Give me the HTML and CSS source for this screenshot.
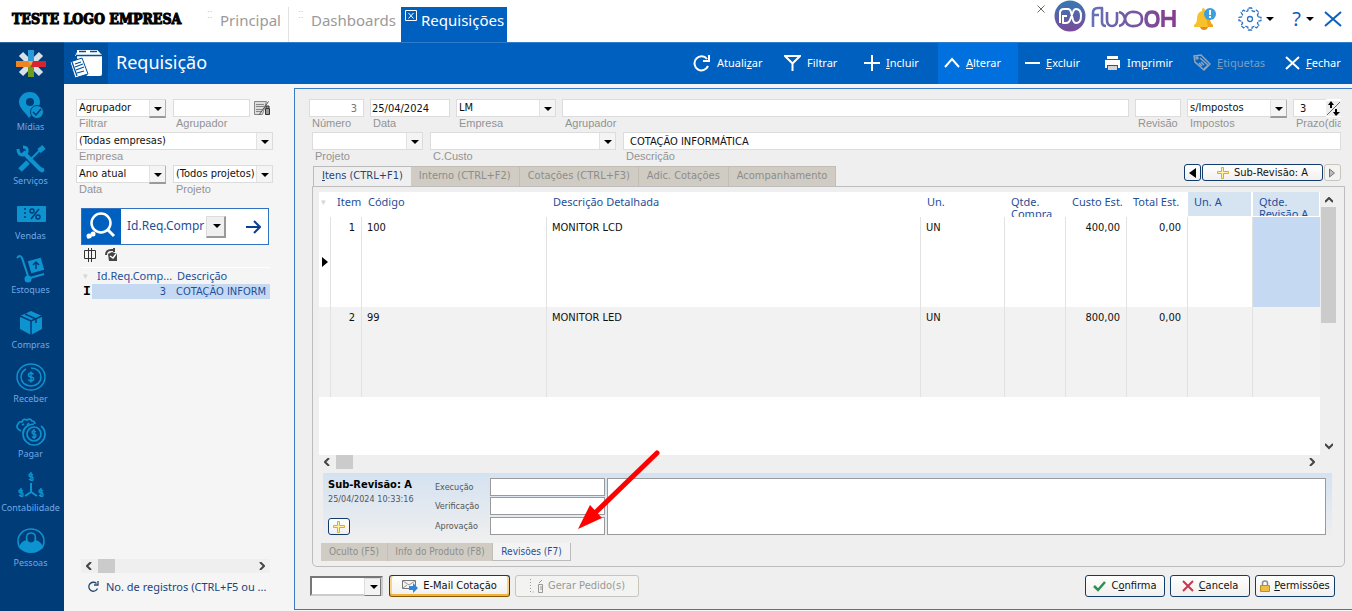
FILE: index.html
```html
<!DOCTYPE html>
<html lang="pt-BR">
<head>
<meta charset="utf-8">
<title>Requisições</title>
<link rel="stylesheet" href="styles.css">
</head>
<body>
<header class="top">
  <div class="company">TESTE LOGO EMPRESA</div>
  <nav class="pages">
    <a class="page" href="#"><span class="dots">⁚⁚</span>Principal</a>
    <a class="page page-second" href="#"><span class="dots">⁚⁚</span>Dashboards</a>
    <a class="page page-on" href="#"><svg class="page-x" width="12" height="12" viewBox="0 0 12 12" fill="none" stroke="#fff"><path d="M.5.5h11v10H.5zM3.5 3l5 5.500M8.500 3l-5 5.500"/></svg>Requisições</a>
  </nav>
  <div class="top-tools">
    <svg class="tiny-x" width="8" height="8" viewBox="0 0 8 8" stroke="#666"><path d="M.5.5l7 7M7.500.5l-7 7"/></svg>
    <svg class="brand" width="124" height="32" viewBox="0 0 124 32" fill="none" stroke-linejoin="round">
      <defs>
        <linearGradient id="g1" x1="0" y1="0" x2="0" y2="1"><stop offset="0" stop-color="#3679b3"/><stop offset="1" stop-color="#7c4a98"/></linearGradient>
        <linearGradient id="g2" gradientUnits="userSpaceOnUse" x1="38" y1="0" x2="122" y2="0"><stop offset="0" stop-color="#6473b5"/><stop offset="1" stop-color="#873c8d"/></linearGradient>
      </defs>
      <circle cx="16" cy="16" r="15.500" fill="url(#g1)"/>
      <path stroke="#fff" stroke-width="2" d="M6 23V13q0-4 4-4h4q2 0 3 3l2 8q1 3 3 3 5 0 5-7t-5-7q-2 0-3 3l-3 8q-1 3-4 3h-3v-8M8 16h5"/>
      <path stroke="url(#g2)" stroke-width="2.600" d="M39 27V13q0-5 5-5h4v14q0 4 4 4M39 15h6M53 12v8q0 6 5 6t5-6v-8M65 12q5 1 6 7t6 7M65 26q5-1 6-7t6-7q11-1 11 7t-11 7"/>
      <path stroke="url(#g2)" stroke-width="3.500" d="M98 12q-6 0-6 7t6 7 6-7-6-7M109 10v17M120 10v17M109 18.500h11"/>
    </svg>
    <svg class="bell" width="22" height="24" viewBox="0 0 22 24"><path fill="#f8c02a" d="M9 1q2 0 2 3 5 1 5 8 0 4 3 6v2H0v-2q3-2 3-6 0-7 5-8 0-3 1-3z"/><path fill="#f0a51c" d="M11 4q5 1 5 8 0 4 3 6v2h-5z"/><path fill="#e18a1e" d="M6 20h8q-1 3-4 3t-4-3z"/><circle cx="16" cy="7" r="6" fill="#3b9fe0"/><path stroke="#fff" stroke-width="2" d="M16 3v5M16 9v2"/></svg>
    <svg class="gear" width="24" height="24" viewBox="-12 -12 24 24" fill="none" stroke="#2a72c4" stroke-width="1.300" stroke-linejoin="round"><path stroke-dasharray="4 1" d="M8.200-2.200L11-1.700V1.700L8.200 2.200 7.400 4.200 8.900 6.500 6.500 8.900 4.200 7.400 2.200 8.200 1.700 11H-1.700L-2.200 8.200-4.200 7.400-6.500 8.900-8.900 6.500-7.400 4.200-8.200 2.200-11 1.700V-1.700L-8.200-2.200-7.400-4.200-8.900-6.500-6.500-8.900-4.200-7.400-2.200-8.200-1.700-11H1.700L2.200-8.200 4.200-7.400 6.500-8.900 8.900-6.500 7.400-4.200z"/><circle r="2.500"/></svg>
    <i class="tri tri-gear"></i>
    <span class="help">?</span><i class="tri tri-help"></i>
    <svg class="big-x" width="18" height="16" viewBox="0 0 18 16" stroke="#0a5fc0" stroke-width="2"><path d="M1 1l16 14M17 1L1 15"/></svg>
  </div>
</header>

<div class="shell">
  <aside class="side">
    <div class="star"><svg width="32" height="30" viewBox="0 0 32 30" stroke-width="6" fill="none"><path stroke="#d9e0e8" d="M6 5l20 20M26 5L6 25"/><path stroke="#2a9bd8" d="M16 1v13"/><path stroke="#6d9c1e" d="M16 15v13"/><path stroke="#ee8522" d="M1 15h14"/><path stroke="#d8242c" d="M16 15h15"/><path fill="#f3a24c" stroke="none" d="M13 12h5l-2 5z"/></svg></div>
    <nav class="modules">
      <a class="mod" href="#"><svg width="32" height="30" viewBox="0 0 32 30"><path fill="#0d93d0" d="M15 2C8 2 4 7 4 12c0 6 6 10 10 16 6-7 11-10 11-16 0-5-4-10-10-10z"/><circle cx="15" cy="12" r="4" fill="#003c78"/><circle cx="22" cy="22" r="6.500" fill="#0d93d0" stroke="#003c78"/><path d="M18 22l3 3 5-6" fill="none" stroke="#003c78" stroke-width="1.500"/></svg>Mídias</a>
      <a class="mod" href="#"><svg width="32" height="30" viewBox="0 0 32 30" fill="none" stroke="#0d93d0"><path stroke-width="4" d="M8 8l18 18"/><path stroke-width="3" d="M3 5q0 6 5 6 5-1 4-6-1-2-4-2"/><path stroke-width="2" d="M28 3L14 17"/><path stroke-width="5" d="M29 3l-5 4M13 18l-8 8"/><circle cx="27" cy="26" r="2" fill="#0d93d0"/></svg>Serviços</a>
      <a class="mod" href="#"><svg width="32" height="30" viewBox="0 0 32 30"><rect x="2" y="7" width="29" height="16" rx="1" fill="#0d93d0"/><path stroke="#003c78" stroke-dasharray="2 2" stroke-width="1.500" d="M10 9v12"/><g fill="none" stroke="#003c78" stroke-width="1.500"><circle cx="17" cy="12" r="2"/><circle cx="23" cy="18" r="2"/><path d="M24 10l-8 10"/></g></svg>Vendas</a>
      <a class="mod" href="#"><svg width="32" height="30" viewBox="0 0 32 30" fill="none" stroke="#0d93d0" stroke-width="2"><path d="M2 5q3-4 5 0l6 18M15 25l14-4"/><circle cx="13" cy="26" r="2.500" fill="#0d93d0"/><path fill="#0d93d0" d="M14 9l11-3 3 10-11 3z"/><path stroke="#003c78" stroke-width="1.500" d="M21 16V9M18 12l3-3 3 3"/></svg>Estoques</a>
      <a class="mod" href="#"><svg width="32" height="30" viewBox="0 0 32 30"><path fill="#0d93d0" d="M16 3l11 5v13l-11 6-11-6V8z"/><path d="M5 8l11 5 11-5M16 13v14M10 6l11 5v4" fill="none" stroke="#003c78" stroke-width="1.500"/></svg>Compras</a>
      <a class="mod" href="#"><svg width="32" height="30" viewBox="0 0 32 30" fill="none" stroke="#0d93d0" stroke-width="1.500"><ellipse cx="16" cy="15" rx="14" ry="13"/><path d="M11 7q-5 3-5 8c0 5 4 9 10 9s10-4 10-9-4-9-10-9"/><path d="M18.500 12.500q-1-1.500-2.500-1.500-2.500 0-2.500 2t2.500 2 2.500 2-2.500 2q-2 0-2.500-1.500M16 9.500v11"/></svg>Receber</a>
      <a class="mod" href="#"><svg width="32" height="30" viewBox="0 0 32 30" fill="none" stroke="#0d93d0" stroke-width="1.700"><path d="M6 14Q0 11 3 7q1-3 4-2 1-4 5-2 3-2 5 1 3 0 3 3M7 8l2-1M12 8l2-2"/><path d="M26 9q4 3 4 8c0 6-5 11-11 11S8 23 8 17 13 7 19 7"/><circle cx="19" cy="17" r="7"/><path d="M21 15q-4-2-4 0t2 2 2 2-4 1M19 12v10" stroke-width="1.300"/></svg>Pagar</a>
      <a class="mod" href="#"><svg width="32" height="30" viewBox="0 0 32 30" fill="none" stroke="#0d93d0" stroke-width="1.400"><path stroke-width="2" d="M16 12v9l-6 4M16 21l6 4"/><path d="M18 4q-4-2-4 0t2 1.500T18 8t-4 0M16 1v9M8 20q-4-2-4 0t2 1.500T8 24t-4 0M6 17v9M28 20q-4-2-4 0t2 1.500 2 2.500-4 0M26 17v9"/></svg>Contabilidade</a>
      <a class="mod" href="#"><svg width="32" height="30" viewBox="0 0 32 30"><path d="M6 23Q3 20 3 15C3 8 9 3 16 3s13 5 13 12q0 5-3 8" fill="none" stroke="#0d93d0" stroke-width="1.500"/><path d="M12 15q-2-8 4-8t4 8" fill="none" stroke="#0d93d0" stroke-width="1.500"/><path fill="#0d93d0" d="M12 14q4 5 8 0 6 1 8 7-4 6-12 6T4 21q2-6 8-7z"/></svg>Pessoas</a>
    </nav>
  </aside>

  <div class="work">
    <div class="bar">
      <div class="bar-icon"><svg width="36" height="30" viewBox="0 0 36 30"><path fill="#fff" d="M7 1h20l5 5v19q0 2-2 2H17L7 9z"/><path fill="#fff" d="M8 1h19l5 6H5z"/><path stroke="#0050a0" stroke-width="1.500" d="M9 2.500h7M20 2.500h7M6 6.500h26" fill="none"/><path fill="#fff" stroke="#0050a0" d="M0 13l12-4 6 16-13 4z"/><path stroke="#0050a0" stroke-width="1.300" d="M5 15l6-2M5 18l8-3M6 21l8-3M7 24l7-2M2 13l5 14"/></svg></div>
      <h1 class="bar-title">Requisição</h1>
      <div class="acts">
        <button class="act w91"><svg width="18" height="18" viewBox="0 0 18 18" fill="none" stroke="#fff" stroke-width="2"><path d="M15 12a7 7 0 1 1-1-7M16 1v6h-6"/></svg><span>Atuali<u>z</u>ar</span></button>
        <button class="act w80"><svg width="17" height="18" viewBox="0 0 17 18" fill="none" stroke="#fff" stroke-width="2"><path d="M1 2h15L9 9H8zM8.500 9v8"/></svg><span>Filtrar</span></button>
        <button class="act w80"><svg width="16" height="18" viewBox="0 0 16 18" stroke="#fff" stroke-width="2"><path d="M0 9h16M8 1v16"/></svg><span><u>I</u>ncluir</span></button>
        <button class="act w80 act-on"><svg width="16" height="18" viewBox="0 0 16 18" fill="none" stroke="#fff" stroke-width="2"><path d="M1 13l7-8 7 8"/></svg><span><u>A</u>lterar</span></button>
        <button class="act w80"><svg width="16" height="18" viewBox="0 0 16 18" stroke="#fff" stroke-width="2"><path d="M1 9h15"/></svg><span><u>E</u>xcluir</span></button>
        <button class="act w89"><svg width="17" height="18" viewBox="0 0 17 18"><path fill="#fff" d="M3 2h11v3H3zM1 6h15v8h-2v-3H3v3H1z"/><path fill="#d4d4d4" d="M4 12h9v4H4z"/></svg><span>Im<u>p</u>rimir</span></button>
        <button class="act w92 act-off" disabled><svg width="18" height="18" viewBox="0 0 18 18" fill="none" stroke="#91a4b8" stroke-width="1.500"><path d="M1 2l7-1 9 9-6 6-9-8zM7 4l8 7-4 4M8 8l3 3M6 9l3 3"/><circle cx="4" cy="4" r="1"/></svg><span><u>E</u>tiquetas</span></button>
        <button class="act w73"><svg width="15" height="18" viewBox="0 0 15 18" stroke="#fff" stroke-width="2"><path d="M1 3l13 12M14 3L1 15"/></svg><span><u>F</u>echar</span></button>
      </div>
    </div>

    <div class="content">
      <section class="finder">
        <div class="row row-f">
          <div class="field f90"><span class="combo raised"><select id="fFiltrar"><option>Agrupador</option></select></span><label for="fFiltrar">Filtrar</label></div>
          <div class="field f77"><input id="fAgr" type="text"><label for="fAgr">Agrupador</label></div>
          <button class="edit-list" aria-label="Editar"><svg width="17" height="17" viewBox="0 0 17 17" fill="none" stroke="#888"><path fill="#ddd" d="M.5 1.500h12l-4 13h-8zM2 4.500h8M2 6.500h8M2 9.500h7M2 11.500h6"/><path stroke="#555" d="M14.500 1.500L5 15"/><path fill="#999" stroke="#333" d="M11.500 8.500h4v6h-4zM12 8V6h3v2"/></svg></button>
        </div>
        <div class="row row-f"><div class="field grow"><span class="combo"><select id="fEmp"><option>(Todas empresas)</option></select></span><label for="fEmp">Empresa</label></div></div>
        <div class="row row-f">
          <div class="field f90"><span class="combo raised"><select id="fData"><option>Ano atual</option></select></span><label for="fData">Data</label></div>
          <div class="field grow"><span class="combo"><select id="fProj"><option>(Todos projetos)</option></select></span><label for="fProj">Projeto</label></div>
        </div>
        <div class="search">
          <span class="search-ic"><svg width="40" height="34" viewBox="0 0 40 34" fill="none" stroke="#fff" stroke-width="2.500"><circle cx="19" cy="14" r="9.500"/><path stroke-width="3" d="M25 20l7 7"/><g stroke="none" fill="#fff"><circle cx="7" cy="27" r="2.500"/><circle cx="11" cy="25" r="2.500"/><path d="M5 30l3-4 2 2z"/></g></svg></span>
          <span class="combo chunky"><select aria-label="Campo de busca"><option>Id.Req.Compr</option></select></span>
          <button class="go" aria-label="Buscar"><svg width="15" height="14" viewBox="0 0 15 14" fill="none" stroke="#0a3f96" stroke-width="2"><path d="M0 7h13M8 1l6 6-6 6"/></svg></button>
        </div>
        <div class="mini">
          <svg width="12" height="14" viewBox="0 0 12 14" fill="none" stroke="#333"><path d="M.5 2.500h11v8H.5z"/><path d="M4.500 0v14M7.500 0v14"/></svg>
          <svg width="13" height="13" viewBox="0 0 13 13" fill="none"><path stroke="#444" stroke-width="2" d="M1 7Q1 2 6 2h3M9 0v4"/><path fill="#444" d="M3 6l4-2 5 2v7H4z"/><path stroke="#fff" stroke-width="1.500" d="M5 8l3 2 3-4"/></svg>
        </div>
        <table class="list">
          <colgroup><col class="c11"><col class="c80"><col></colgroup>
          <thead><tr><th class="pale">▾</th><th>Id.Req.Comp...</th><th>Descrição</th></tr></thead>
          <tbody><tr><td class="cur">I</td><td class="sel num">3</td><td class="sel">COTAÇÃO INFORM</td></tr></tbody>
        </table>
        <div class="hbar hbar-left"><svg width="7" height="8" viewBox="0 0 7 8" class="chev"><path d="M5 0L1 4l4 4"/></svg><i class="thumb"></i><svg width="7" height="8" viewBox="0 0 7 8" class="chev end"><path d="M2 0l4 4-4 4"/></svg></div>
        <button class="count"><svg width="11" height="11" viewBox="0 0 11 11" fill="none" stroke="#27496f" stroke-width="1.300"><path d="M9.500 7.500a4.500 4.500 0 1 1-1-5M10 0v4H6"/></svg>No. de registros (CTRL+F5 ou ...</button>
      </section>

      <main class="form">
        <div class="row gap6">
          <div class="field f55"><input class="right dim" id="num" type="text" value="3"><label for="num">Número</label></div>
          <div class="field f80"><input class="tight" id="dat" type="text" value="25/04/2024"><label for="dat">Data</label></div>
          <div class="field f100"><span class="combo"><select id="emp"><option>LM</option></select></span><label for="emp">Empresa</label></div>
          <div class="field grow"><input id="agr" type="text"><label for="agr">Agrupador</label></div>
          <div class="field f46"><input id="rev" type="text"><label for="rev">Revisão</label></div>
          <div class="field f100"><span class="combo raised"><select id="imp"><option>s/Impostos</option></select></span><label for="imp">Impostos</label></div>
          <div class="field f48"><span class="spin"><input id="prz" type="text" value="3"><svg width="15" height="15" viewBox="0 0 15 15"><path stroke="#666" d="M1 14L14 1"/><path d="M5 0l3 4H6v3H4V4H2zM10 15l-3-4h2V8h2v3h3z"/></svg></span><label for="prz">Prazo(dia</label></div>
        </div>
        <div class="row gap7 row-b">
          <div class="field f111"><span class="combo"><select id="prj"><option></option></select></span><label for="prj">Projeto</label></div>
          <div class="field f186"><span class="combo"><select id="cc"><option></option></select></span><label for="cc">C.Custo</label></div>
          <div class="field grow"><input id="desc" type="text" value="COTAÇÃO INFORMÁTICA"><label for="desc">Descrição</label></div>
        </div>
        <div class="tabline">
          <button class="tab tab-on"><span><u>I</u>tens (CTRL+F1)</span></button><button class="tab">Interno (CTRL+F2)</button><button class="tab">Cotações (CTRL+F3)</button><button class="tab">Adic. Cotações</button><button class="tab">Acompanhamento</button>
          <div class="revnav">
            <button class="btn nav-btn" aria-label="Anterior"><svg width="7" height="10" viewBox="0 0 7 10"><path d="M7 0v10L0 5z"/></svg></button>
            <button class="btn rev-btn"><svg width="12" height="12" viewBox="0 0 12 12"><path fill="#fff3a8" stroke="#e6a91c" d="M4.500.5h2v4h5v2h-5v5h-2v-5h-4v-2h4z"/></svg>Sub-Revisão: A</button>
            <button class="btn nav-btn off" aria-label="Próximo"><svg width="7" height="10" viewBox="0 0 7 10"><path fill="#bbb" stroke="#777" d="M.5 1v8l5-4z"/></svg></button>
          </div>
        </div>

        <div class="pane">
          <div class="gridbox">
            <div class="gridwhite">
              <table class="items">
                <colgroup><col class="c11"><col class="c31"><col class="c185"><col><col class="c84"><col class="c61"><col class="c61"><col class="c61"><col class="c65"><col class="c68"></colgroup>
                <thead><tr><th class="pale">▾</th><th>Item</th><th>Código</th><th>Descrição Detalhada</th><th>Un.</th><th><div class="clip">Qtde.<br>Compra</div></th><th>Custo Est.</th><th>Total Est.</th><th class="hl"><div class="clip tint">Un. A</div></th><th class="hl"><div class="clip tint">Qtde.<br>Revisão A</div></th></tr></thead>
                <tbody>
                  <tr><td class="mark"><svg width="6" height="10" viewBox="0 0 6 10"><path d="M0 0v10l6-5z"/></svg></td><td class="num">1</td><td>100</td><td>MONITOR LCD</td><td>UN</td><td></td><td class="num">400,00</td><td class="num">0,00</td><td></td><td class="selcell"></td></tr>
                  <tr class="alt"><td></td><td class="num">2</td><td>99</td><td>MONITOR LED</td><td>UN</td><td></td><td class="num">800,00</td><td class="num">0,00</td><td></td><td></td></tr>
                </tbody>
              </table>
            </div>
            <div class="vbar"><svg width="8" height="7" viewBox="0 0 8 7" class="chev"><path d="M0 5l4-4 4 4"/></svg><i class="vthumb"></i><svg width="8" height="7" viewBox="0 0 8 7" class="chev down"><path d="M0 1l4 4 4-4"/></svg></div>
          </div>
          <div class="hbar hbar-grid"><svg width="7" height="8" viewBox="0 0 7 8" class="chev"><path d="M5 0L1 4l4 4"/></svg><i class="thumb"></i><svg width="7" height="8" viewBox="0 0 7 8" class="chev end"><path d="M2 0l4 4-4 4"/></svg></div>
          <div class="subrev">
            <div class="sub-id"><strong>Sub-Revisão: A</strong><span>25/04/2024 10:33:16</span>
              <button class="btn plus" aria-label="Adicionar"><svg width="12" height="12" viewBox="0 0 12 12"><path fill="#fff3a8" stroke="#e6a91c" d="M4.500.5h2v4h5v2h-5v5h-2v-5h-4v-2h4z"/></svg></button></div>
            <div class="steps">
              <label for="exe">Execução</label><input id="exe" type="text">
              <label for="ver">Verificação</label><input id="ver" type="text">
              <label for="apr">Aprovação</label><input id="apr" type="text">
            </div>
            <textarea class="notes" aria-label="Observações"></textarea>
          </div>
          <div class="subtabs"><button class="stab w67">Oculto (F5)</button><button class="stab w105">Info do Produto (F8)</button><button class="stab stab-on w78">Revisões (F7)</button></div>
          <svg class="pointer" width="84" height="82" viewBox="0 0 84 82"><path d="M80 3L19 62" stroke="#f00" stroke-width="5" stroke-linecap="round"/><path fill="#f00" d="M1 79L13 55l12 13z"/></svg>
        </div>

        <div class="foot">
          <span class="combo boxy"><select aria-label="Opção"><option></option></select></span>
          <button class="btn mail"><svg width="16" height="14" viewBox="0 0 16 14"><path fill="#f4f4f4" stroke="#777" d="M.5 1.500h13v8H.5z"/><path fill="none" stroke="#999" d="M1 2l6 4 6-4M1 9l4-3"/><path fill="#2e86d8" d="M7 7h4V4l5 5-5 5v-3H7z"/></svg>E-Mail Cotação</button>
          <button class="btn off order" disabled><svg width="14" height="14" viewBox="0 0 14 14" fill="none" stroke="#999"><path stroke-dasharray="1 2" d="M1.500 0v13h4"/><path d="M9.500 5.500h4v8h-4zM10 4l3-3M11 8h2M11 10h2"/></svg>Gerar Pedido(s)</button>
          <span class="grow"></span>
          <button class="btn w80"><svg width="13" height="12" viewBox="0 0 13 12" fill="none" stroke="#2e8f55" stroke-width="2.500"><path d="M1 6l4 4 7-8"/></svg><span>C<u>o</u>nfirma</span></button>
          <button class="btn w80"><svg width="12" height="12" viewBox="0 0 12 12" stroke="#c9364c" stroke-width="2"><path d="M1 1l10 10M11 1L1 11"/></svg><span><u>C</u>ancela</span></button>
          <button class="btn w80 perm"><svg width="10" height="12" viewBox="0 0 10 12"><path fill="none" stroke="#8b8b8b" stroke-width="1.500" d="M2.500 6V3q0-2 2.500-2t2.500 2v3"/><path fill="#edbd45" stroke="#c18f26" d="M.5 5.500h9v6h-9z"/></svg><span><u>P</u>ermissões</span></button>
        </div>
      </main>
    </div>
  </div>
</div>
</body>
</html>
```
FILE: styles.css
```css
* { box-sizing: border-box; }
body {
  margin: 0;
  height: 100vh;
  min-height: 600px;
  display: flex;
  flex-direction: column;
  background: #f5f5f5;
  color: #111;
  font: 11px/14px "DejaVu Sans Condensed", "DejaVu Sans", sans-serif;
}
button, input, select, textarea { font: inherit; color: inherit; margin: 0; padding: 0; border-radius: 0; }
button { border: 0; background: none; white-space: nowrap; }
a { color: inherit; text-decoration: none; }
svg { display: block; flex: none; }
.grow { flex: 1; min-width: 0; }

/* Top strip */
.top { height: 42px; flex: none; display: flex; background: #fff; }
.company { width: 200px; padding: 9px 0 0 12px; font: bold 14px/21px "DejaVu Serif Condensed", "DejaVu Serif", serif; color: #000; white-space: nowrap; -webkit-text-stroke: 1px #000; }
.pages { display: flex; padding-top: 7px; font: 15px/26px "Noto Sans", sans-serif; color: #9a9a9a; }
.page { display: flex; width: 88px; padding-left: 7px; }
.page-second { width: 113px; border-left: 1px solid #e2e2e2; padding-left: 9px; }
.dots { width: 13px; font: 9px/16px "DejaVu Sans", sans-serif; color: #c4c4c4; }
.page-on { width: 106px; padding-left: 4px; gap: 4px; background: #0060c0; color: #fff; }
.page-x { margin-top: 3px; }
.top-tools { margin-left: auto; display: flex; align-items: flex-start; padding-right: 10px; }
.tiny-x { margin: 5px 9px 0 0; }
.brand { margin-right: 16px; }
.bell { margin: 7px 22px 0 0; }
.gear { margin: 7px 4px 0 0; }
.help { font: 20px/28px "Noto Sans", sans-serif; color: #0a5fc0; margin: 5px 5px 0 18px; }
.tri { border: 4px solid transparent; border-top-color: #000; border-bottom: 0; margin-top: 17px; }
.big-x { margin: 11px 0 0 10px; }

/* Shell and module rail */
.shell { flex: 1; display: flex; min-height: 0; }
.side { width: 64px; flex: none; display: flex; flex-direction: column; background: #003c78; border-top: 1px solid #2a66a2; padding-bottom: 36px; }
.star { height: 42px; padding: 6px 0 0 15px; }
.modules { flex: 1; display: flex; flex-direction: column; }
.mod { flex: 1; display: flex; flex-direction: column; align-items: center; padding: 5px 3px 0 0; font: 9px/14px "Noto Sans", sans-serif; color: #6fa8e6; }
.work { flex: 1; min-width: 0; display: flex; flex-direction: column; }

/* Action bar */
.bar { height: 42px; flex: none; display: flex; background: #0060c0; color: #fff; border-top: 1px solid #2f7cca; font-family: "Noto Sans", sans-serif; }
.bar-icon { width: 44px; background: #0050a0; padding: 6px 0 0 6px; }
.bar-title { margin: 0; padding-left: 8px; font: 18px/38px "Noto Sans", sans-serif; }
.acts { margin-left: auto; display: flex; }
.act { display: flex; align-items: center; gap: 6px; padding: 0 0 2px 6px; font-size: 11px; }
.act-on { background: #0070de; }
.act-off { color: #7f9dbe; }
.w73 { width: 73px; } .w80 { width: 80px; } .w89 { width: 89px; } .w91 { width: 91px; } .w92 { width: 92px; }
.w67 { width: 67px; } .w105 { width: 105px; } .w78 { width: 78px; }

.content { flex: 1; display: flex; min-height: 0; }

/* Fields */
.row { display: flex; height: 33px; }
.row-f { gap: 7px; }
.gap6 { gap: 6px; }
.gap7 { gap: 7px; }
.field { display: flex; flex-direction: column; white-space: nowrap; }
.field label { padding-left: 3px; font: 11px/13px "Liberation Sans", Arial, sans-serif; color: #939393; overflow: hidden; }
.field input, .combo select { width: 100%; height: 18px; border: 1px solid #dcdcdc; background: #fff; padding: 0 6px; outline: 0; }
.combo select { appearance: none; padding: 0 0 0 2px; display: block; }
.combo { position: relative; display: block; }
.combo::before { content: ""; position: absolute; right: 1px; top: 1px; width: 15px; height: 16px; background: #f4f4f4; border-left: 1px solid #e2e2e2; pointer-events: none; }
.combo::after { content: ""; position: absolute; right: 4px; top: 8px; border: 4px solid transparent; border-top-color: #000; border-bottom: 0; pointer-events: none; }
.raised::before { right: 0; height: 16px; border-right: 1px solid #b0b0b0; border-bottom: 2px solid #9a9a9a; }
.field .right { text-align: right; }
.field .dim { color: #777; }
.field .tight { padding-left: 1px; }
.f46 { width: 46px; } .f48 { width: 48px; } .f55 { width: 55px; } .f77 { width: 77px; } .f80 { width: 80px; }
.f90 { width: 90px; } .f100 { width: 100px; } .f111 { width: 111px; } .f186 { width: 186px; }
.spin { display: flex; background: #fff; }
.spin input { flex: 1; min-width: 0; border-right: 0; }
.spin svg { margin-top: 2px; background: #eee; }

/* Finder column */
.finder { width: 209px; flex: none; margin-left: 12px; padding: 15px 12px 17px 0; display: flex; flex-direction: column; }
.edit-list { margin-left: -3px; height: 18px; }
.search { display: flex; height: 37px; margin: 10px 4px 0 5px; border: 1px solid #2f72c4; background: #fff; color: #1f4f9a; font: 12px/16px "Noto Sans", sans-serif; }
.search-ic { width: 39px; background: #0060c0; }
.chunky { width: 105px; margin-top: 8px; }
.chunky select { border: 0; padding-left: 6px; }
.chunky::before { top: -1px; right: 0; width: 17px; height: 19px; background: #f0f0f0; border: 1px solid #ddd; border-right: 2px solid #999; border-bottom: 2px solid #999; }
.chunky::after { right: 5px; top: 7px; }
.go { margin-left: auto; padding-right: 7px; }
.mini { display: flex; gap: 9px; padding: 3px 0 0 8px; height: 22px; }
table { border-collapse: separate; border-spacing: 0; table-layout: fixed; width: 100%; }
th, td { padding: 0; text-align: left; font-weight: normal; vertical-align: top; white-space: nowrap; overflow: hidden; }
th { color: #1f4f9a; font-family: "Noto Sans", sans-serif; }
.list { margin-left: 5px; width: 189px; }
.list th { height: 16px; border-top: 1px solid #fff; padding-left: 5px; line-height: 16px; }
.list td { height: 15px; line-height: 15px; padding-left: 4px; color: #1f4f9a; }
.list .sel { background: #c5daf2; }
.list .cur { padding-left: 2px; color: #000; font: bold 13px/15px "Liberation Mono", monospace; }
.list .num { padding-right: 6px; }
.list th.pale, .items th.pale { padding-left: 2px; color: #d6d6d6; font-size: 9px; }
.num { text-align: right; }
.c11 { width: 11px; } .c31 { width: 31px; } .c61 { width: 61px; } .c65 { width: 65px; } .c68 { width: 68px; }
.c80 { width: 80px; } .c84 { width: 84px; } .c185 { width: 185px; }
.hbar { display: flex; align-items: center; height: 14px; padding: 0 5px; background: #efefef; }
.hbar-left { margin: auto 3px 0 5px; }
.hbar-grid { margin-right: 17px; }
.chev { fill: none; stroke: #444; stroke-width: 2; }
.end { margin-left: auto; }
.thumb { width: 17px; height: 14px; margin-left: 5px; background: #cbcbcb; }
.count { display: flex; align-items: center; gap: 7px; padding-left: 12px; margin-top: 6px; color: #1d4477; font: 11px/15px "Noto Sans", sans-serif; }

/* Form */
.form { flex: 1; min-width: 0; display: flex; flex-direction: column; margin: 4px 0 1px 9px; padding: 10px 11px 0 14px; border: 1px solid #3c7bc4; border-right: 0; background: #efefef; }
.row-b { padding-left: 3px; height: 34px; }
.tabline { display: flex; height: 20px; margin-left: 4px; color: #8c8c8c; }
.tab { background: #d0ccc4; border: solid #c2beb5; border-width: 1px 1px 0 0; padding: 0 8px 1px; font-size: 11px; }
.tab-on { background: #efefef; border-color: #bbb; border-width: 1px 0 0 1px; color: #1f4578; }
.revnav { margin: -2px 0 0 auto; display: flex; gap: 1px; color: #111; }
.btn { display: flex; align-items: center; justify-content: center; gap: 5px; height: 22px; border: 1px solid #123c6c; border-radius: 3px; background: linear-gradient(#fff, #f1f0ee); }
.revnav .btn { height: 17px; }
.nav-btn { width: 17px; }
.rev-btn { width: 121px; }
.off, .nav-btn.off { border-color: #c8c5bd; color: #999; background: #f3f3f1; }
.pane { position: relative; flex: 1; display: flex; flex-direction: column; margin: 0 -4px 0 3px; padding: 5px 7px 5px 6px; border: 1px solid #bdbdbd; border-radius: 0 0 5px 5px; min-height: 0; }
.gridbox { flex: 1; display: flex; min-height: 0; }
.gridwhite { flex: 1; min-width: 0; background: #fff; }
.items th { height: 25px; padding-left: 7px; line-height: 20px; }
.items th.hl { padding-left: 1px; }
.clip { height: 25px; padding-top: 4px; line-height: 12px; overflow: hidden; }
.tint { height: 24px; padding-left: 6px; margin-right: 1px; background: #d6e4f2; }
.items td { height: 90px; padding: 4px 6px 0 5px; border-left: 1px solid #e2e2e2; }
.items td:first-child { border-left: 0; }
.items td.mark { padding: 40px 0 0 3px; }
.alt td { background: #f2f2f2; }
.items .selcell { background: #c5daf2; }
.vbar { width: 17px; display: flex; flex-direction: column; align-items: center; padding: 5px 0; }
.vthumb { width: 15px; height: 116px; margin-top: 3px; background: #cbcbcb; }
.down { margin-top: auto; }
.subrev { display: flex; margin: 4px 5px 0 4px; padding: 5px 6px 5px 5px; height: 67px; background: linear-gradient(#d4e2f1, #efefef); }
.sub-id { width: 107px; display: flex; flex-direction: column; white-space: nowrap; color: #555; font-size: 9px; }
.sub-id strong { color: #000; font-size: 11px; }
.plus { width: 22px; height: 17px; margin-top: 12px; }
.steps { display: grid; grid-template-columns: 55px 115px; row-gap: 1px; font-size: 9px; line-height: 18px; color: #555; }
.steps input, .notes { border: 1px solid #9a9a9a; background: #fff; min-width: 0; height: 18px; outline: 0; }
.notes { flex: 1; margin-left: 2px; height: 57px; resize: none; }
.subtabs { display: flex; height: 18px; margin: 3px 0 0 2px; font-size: 10px; color: #8c8c8c; }
.stab { background: #d0ccc4; border-right: 1px solid #c2beb5; }
.stab-on { background: #f3f3f3; border: solid #bbb; border-width: 0 1px 1px 0; color: #1f4f9a; }
.pointer { position: absolute; left: 264px; top: 263px; pointer-events: none; }
.foot { display: flex; gap: 5px; padding: 8px 6px 12px 1px; }
.boxy { width: 73px; }
.boxy select { height: 20px; margin-top: 1px; border: 2px solid #777; border-right-color: #ccc; border-bottom-color: #ccc; }
.boxy::before { top: 3px; right: 2px; border: 1px solid #ddd; border-right-color: #777; border-bottom-color: #777; }
.boxy::after { top: 10px; right: 5px; }
.mail { width: 121px; margin-left: 1px; border-bottom-color: #8a5a00; box-shadow: inset 0 -2px #f3b23a, inset 2px 0 #f8d489, inset -2px 0 #f8d489; }
.order { width: 124px; }
.perm { gap: 4px; }
```
